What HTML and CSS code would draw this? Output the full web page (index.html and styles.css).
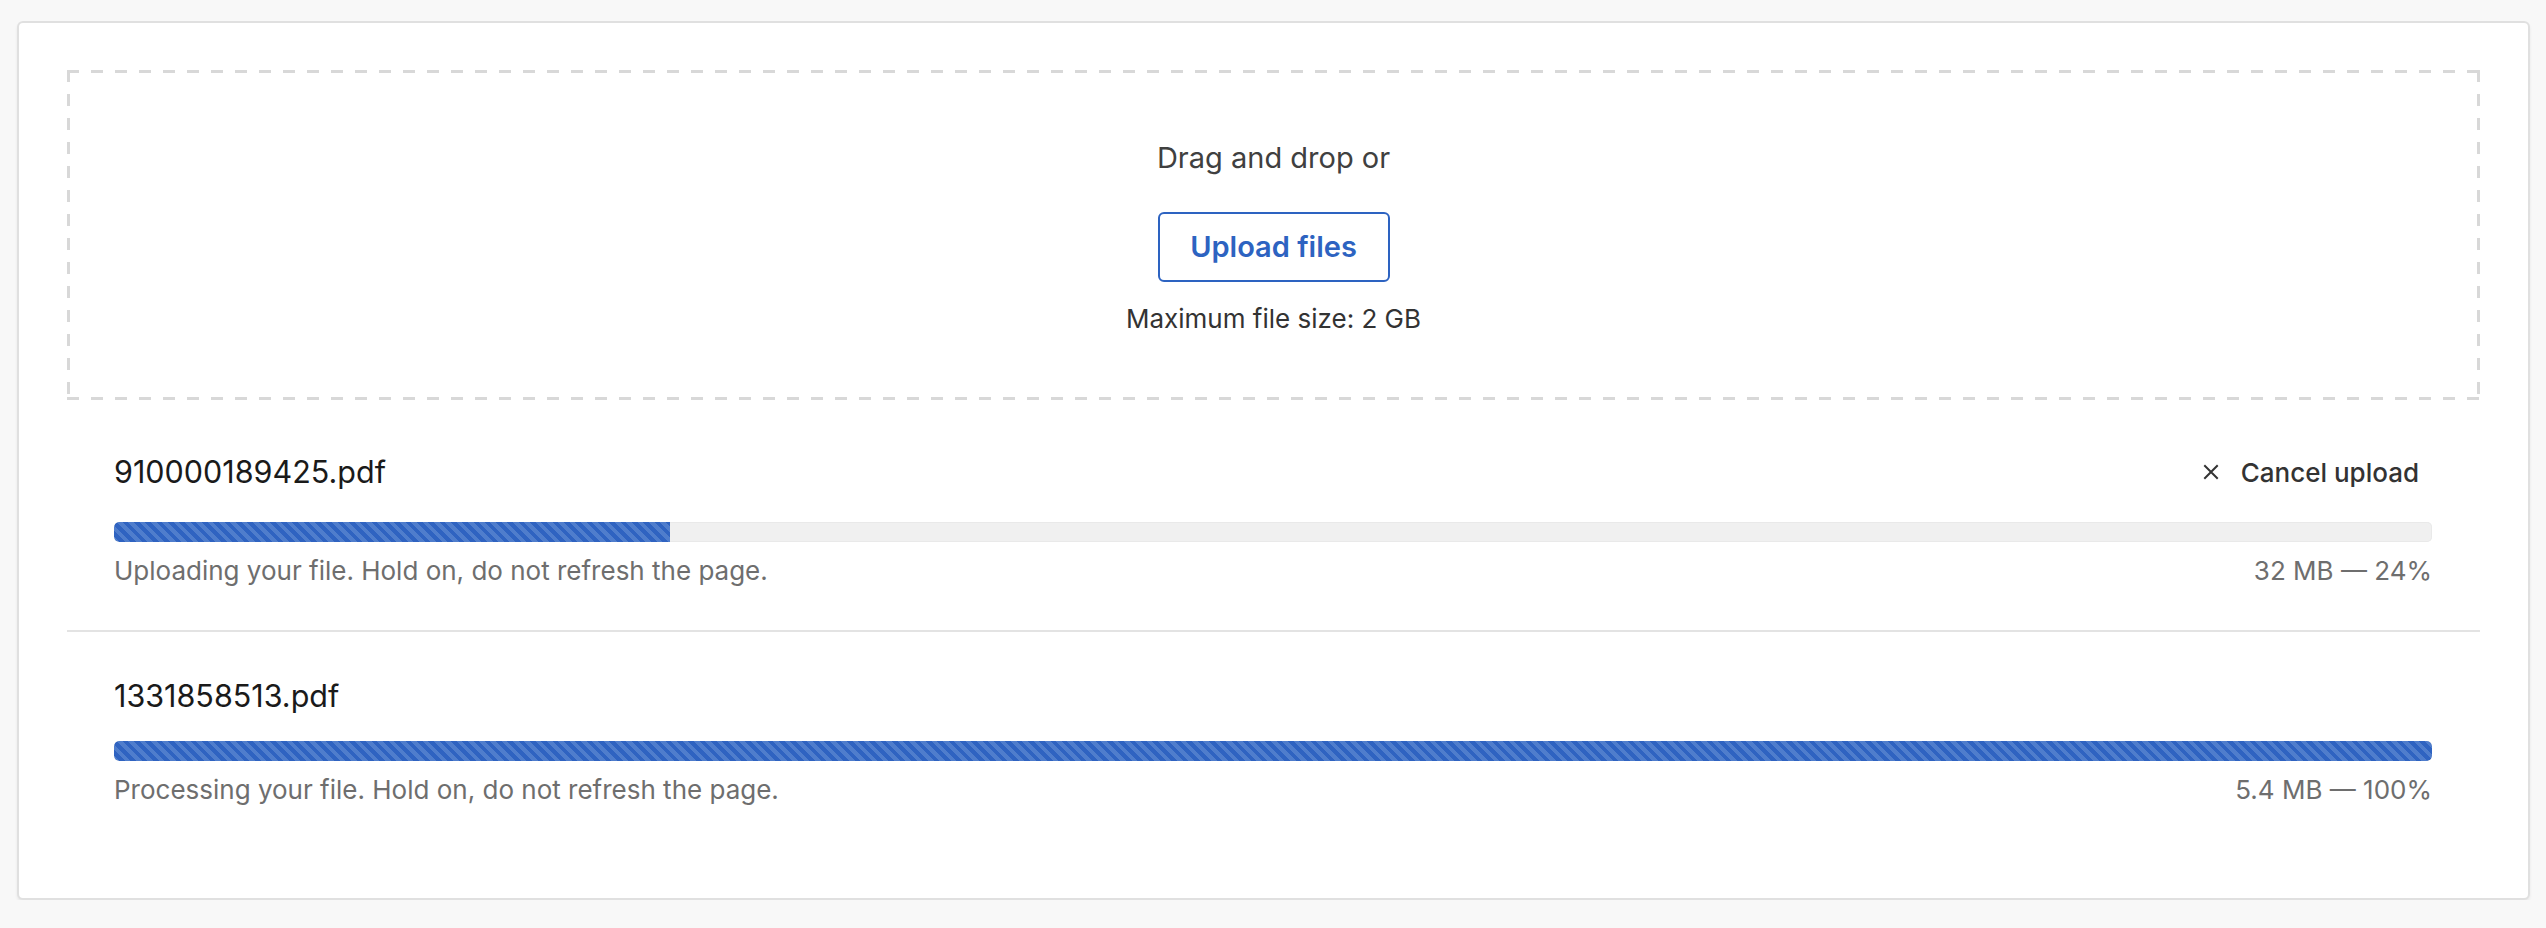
FILE: index.html
```html
<!DOCTYPE html>
<html lang="en">
<head>
<meta charset="utf-8">
<title>Upload files</title>
<link rel="stylesheet" href="styles.css">
</head>
<body>
<div class="card">
  <div class="dropzone">
    <p class="drop-text">Drag and drop or</p>
    <button class="upload-btn" type="button">Upload files</button>
    <p class="max-size">Maximum file size: 2 GB</p>
  </div>
  <ul class="file-list">
    <li class="file-item file-item--uploading">
      <div class="file-head">
        <span class="file-name">910000189425.pdf</span>
        <button class="cancel-btn" type="button">
          <svg class="cancel-icon" width="16" height="16" viewBox="0 0 16 16" aria-hidden="true"><path d="M2 2 L14 14 M14 2 L2 14" stroke="#333" stroke-width="2" fill="none" stroke-linecap="square"/></svg>
          <span>Cancel upload</span>
        </button>
      </div>
      <div class="track"><div class="fill" style="width:24%"></div></div>
      <div class="status">
        <span>Uploading your file. Hold on, do not refresh the page.</span>
        <span>32 MB — 24%</span>
      </div>
    </li>
    <li class="file-item file-item--processing">
      <div class="file-head">
        <span class="file-name">1331858513.pdf</span>
      </div>
      <div class="track"><div class="fill fill--full" style="width:100%"></div></div>
      <div class="status">
        <span>Processing your file. Hold on, do not refresh the page.</span>
        <span>5.4 MB — 100%</span>
      </div>
    </li>
  </ul>
</div>
</body>
</html>
```
FILE: styles.css
```css
* { box-sizing: border-box; }

html, body {
  margin: 0;
  padding: 0;
  background: #f8f8f8;
  font-family: "Inter", "Noto Sans", "Liberation Sans", sans-serif;
}

.card {
  margin: 21px 16px 0 17px;
  background: #fff;
  border: 2px solid #e0e0e0;
  border-radius: 6px;
  box-shadow: 0 2px 3px rgba(0, 0, 0, 0.07);
  padding: 47px 48px 50px 48px;
}

.dropzone {
  height: 330px;
  display: flex;
  flex-direction: column;
  align-items: center;
  padding-top: 68px;
  background:
    repeating-linear-gradient(90deg, #d8d8d8 0 12px, transparent 12px 24px) left top / 100% 3px no-repeat,
    repeating-linear-gradient(90deg, #d8d8d8 0 12px, transparent 12px 24px) left bottom / 100% 3px no-repeat,
    repeating-linear-gradient(180deg, #d8d8d8 0 12px, transparent 12px 24px) left top / 3px 100% no-repeat,
    repeating-linear-gradient(180deg, #d8d8d8 0 12px, transparent 12px 24px) right top / 3px 100% no-repeat;
}

.drop-text {
  margin: 0;
  font-size: 29px;
  line-height: 40px;
  color: #404040;
}

.upload-btn {
  margin-top: 34px;
  height: 70px;
  width: 232px;
  padding: 0;
  border: 2px solid #2d63c1;
  border-radius: 6px;
  background: #fff;
  color: #2d63c1;
  font-family: inherit;
  font-size: 29px;
  font-weight: 600;
  line-height: 40px;
}

.max-size {
  margin: 19px 0 0;
  font-size: 26px;
  line-height: 36px;
  color: #333;
}

.file-list {
  list-style: none;
  margin: 0;
  padding: 0;
}

.file-item {
  padding: 0 48px 40px 47px;
}

.file-item--uploading {
  padding-top: 47px;
  padding-bottom: 41px;
  border-bottom: 2px solid #e3e3e3;
}

.file-item--processing {
  padding-top: 44px;
  padding-bottom: 40px;
}

.file-head {
  display: flex;
  justify-content: space-between;
  align-items: center;
  min-height: 40px;
}

.file-item--uploading .file-head {
  min-height: 50px;
}

.file-name {
  font-size: 30.5px;
  line-height: 40px;
  color: #1a1a1a;
}

.cancel-btn {
  display: flex;
  align-items: center;
  gap: 22px;
  height: 50px;
  padding: 0 13px;
  border: 0;
  background: transparent;
  font-family: inherit;
  font-size: 26px;
  font-weight: 500;
  color: #333;
}

.cancel-icon {
  display: block;
}

.track {
  margin-top: 25px;
  height: 20px;
  border-radius: 5px;
  background: #f0f0f0;
  box-shadow: inset 0 0 0 1px #e9e9e9;
  overflow: hidden;
}

.fill {
  height: 100%;
  border-radius: 5px 0 0 5px;
  background: repeating-linear-gradient(45deg, #4f7dcc 0 4px, #2f63c1 4px 8px);
}

.fill--full {
  border-radius: 5px;
}

.status {
  margin-top: 11px;
  display: flex;
  justify-content: space-between;
  font-size: 26px;
  line-height: 36px;
  color: #6e6e6e;
}
```
